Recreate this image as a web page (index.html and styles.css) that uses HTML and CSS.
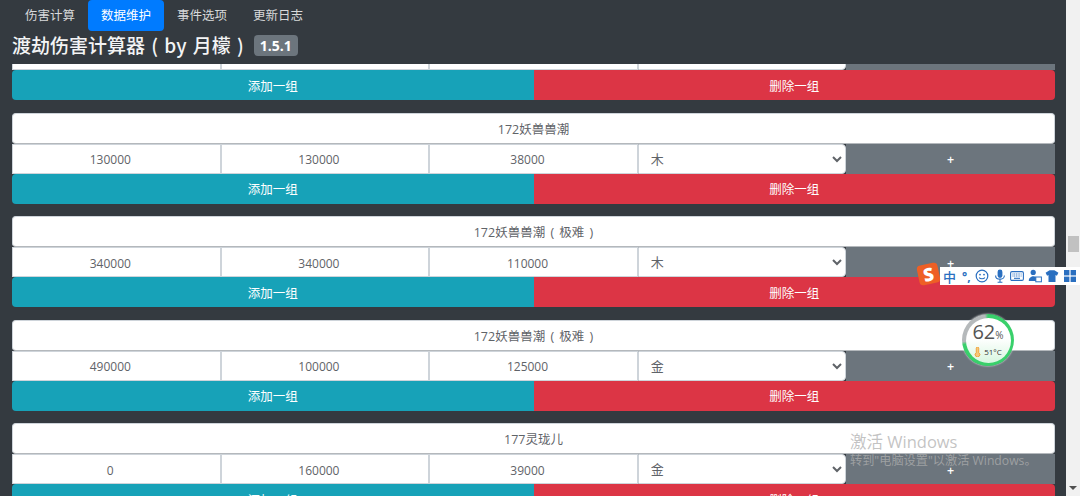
FILE: index.html
```html
<!DOCTYPE html>
<html lang="zh-CN">
<head>
    <meta charset="UTF-8">
    <meta name="viewport" content="width=device-width, initial-scale=1.0">
    <title>渡劫伤害计算器</title>
    <link rel="stylesheet" href="styles.css">
</head>
<body>
    <div class="page">
        <div class="main">
            <div class="top">
                <nav class="tabs">
                    <a class="tab">伤害计算</a>
                    <a class="tab active">数据维护</a>
                    <a class="tab">事件选项</a>
                    <a class="tab">更新日志</a>
                </nav>
                <h1 class="heading">渡劫伤害计算器 ( by 月檬 )<span class="badge">1.5.1</span></h1>
            </div>
            <div class="list">
                <div class="group first">
                    <div class="fields">
                        <input class="field" value="0">
                        <input class="field" value="0">
                        <input class="field" value="0">
                        <select class="field pick"><option>木</option></select>
                        <button class="plus">+</button>
                    </div>
                    <div class="actions">
                        <button class="add">添加一组</button>
                        <button class="del">删除一组</button>
                    </div>
                </div>
                <div class="group">
                    <input class="name" value="172妖兽兽潮">
                    <div class="fields">
                        <input class="field" value="130000">
                        <input class="field" value="130000">
                        <input class="field" value="38000">
                        <select class="field pick"><option>木</option></select>
                        <button class="plus">+</button>
                    </div>
                    <div class="actions">
                        <button class="add">添加一组</button>
                        <button class="del">删除一组</button>
                    </div>
                </div>
                <div class="group">
                    <input class="name" value="172妖兽兽潮 ( 极难 )">
                    <div class="fields">
                        <input class="field" value="340000">
                        <input class="field" value="340000">
                        <input class="field" value="110000">
                        <select class="field pick"><option>木</option></select>
                        <button class="plus">+</button>
                    </div>
                    <div class="actions">
                        <button class="add">添加一组</button>
                        <button class="del">删除一组</button>
                    </div>
                </div>
                <div class="group">
                    <input class="name" value="172妖兽兽潮 ( 极难 )">
                    <div class="fields">
                        <input class="field" value="490000">
                        <input class="field" value="100000">
                        <input class="field" value="125000">
                        <select class="field pick"><option>金</option></select>
                        <button class="plus">+</button>
                    </div>
                    <div class="actions">
                        <button class="add">添加一组</button>
                        <button class="del">删除一组</button>
                    </div>
                </div>
                <div class="group">
                    <input class="name" value="177灵珑儿">
                    <div class="fields">
                        <input class="field" value="0">
                        <input class="field" value="160000">
                        <input class="field" value="39000">
                        <select class="field pick"><option>金</option></select>
                        <button class="plus">+</button>
                    </div>
                    <div class="actions">
                        <button class="add">添加一组</button>
                        <button class="del">删除一组</button>
                    </div>
                </div>
            </div>
        </div>
        <div class="scrollbar">
            <div class="thumb"></div>
            <div class="arrow"></div>
        </div>
    </div>

    <!-- desktop things lying over the browser -->
    <div class="ime">
        <span class="ime-logo">S</span>
        <span class="ime-zh">中</span>
        <span class="ime-punct">°,</span>
        <svg class="ime-icon" viewBox="0 0 14 14"><circle cx="7" cy="7" r="5.8" fill="none" stroke="#2a6fc0" stroke-width="1.2"/><circle cx="5" cy="5.6" r=".9" fill="#2a6fc0"/><circle cx="9" cy="5.6" r=".9" fill="#2a6fc0"/><path d="M4.2 8.4c.8 1.7 4.8 1.7 5.6 0" fill="none" stroke="#2a6fc0" stroke-width="1.1"/></svg>
        <svg class="ime-icon" viewBox="0 0 14 14"><rect x="4.6" y="0.5" width="4.8" height="8.5" rx="2.4" fill="#2a6fc0"/><path d="M2.6 6.4c0 5 8.8 5 8.8 0M7 10.5v2.4M4.6 13.2h4.8" fill="none" stroke="#2a6fc0" stroke-width="1.1"/></svg>
        <svg class="ime-icon" viewBox="0 0 14 14"><rect x="0.6" y="2.6" width="12.8" height="8.8" rx="1.4" fill="none" stroke="#2a6fc0" stroke-width="1.1"/><path d="M2.5 5h9M2.5 7h9" stroke="#2a6fc0" stroke-width="1.1" stroke-dasharray="1 .7"/><path d="M4 9.3h6" stroke="#2a6fc0" stroke-width="1.1"/></svg>
        <svg class="ime-icon" viewBox="0 0 14 14"><circle cx="5.2" cy="3.4" r="2.6" fill="#2a6fc0"/><path d="M.8 12c0-6 8.6-6 8.4-1.5V12z" fill="#2a6fc0"/><rect x="7.8" y="8" width="5.6" height="4.8" fill="#fff" stroke="#2a6fc0"/></svg>
        <svg class="ime-icon" viewBox="0 0 14 14"><path d="M4.6 1.2h4.8l4 2.6-1.5 3-1.4-.7v7H3.500v-7l-1.400.7-1.500-3z" fill="#2a6fc0"/></svg>
        <svg class="ime-icon" viewBox="0 0 14 14"><rect x="1" y="1" width="5.400" height="5.400" fill="#2a6fc0"/><rect x="7.600" y="1" width="5.400" height="5.400" fill="#2a6fc0"/><rect x="1" y="7.600" width="5.400" height="5.400" fill="#2a6fc0"/><rect x="7.600" y="7.600" width="5.400" height="5.400" fill="#2a6fc0"/></svg>
    </div>

    <div class="gauge">
        <div class="gauge-inner">
            <div class="gauge-num">62<small>%</small></div>
            <div class="gauge-temp"><svg class="gauge-therm" viewBox="0 0 8 12"><path d="M2.500 1.500a1.500 1.500 0 0 1 3 0v5.300a2.800 2.800 0 1 1-3 0z" fill="#f6c77b" stroke="#ef9a2d"/></svg>51°C</div>
        </div>
    </div>

    <div class="activate">
        <div class="activate-title">激活 Windows</div>
        <div class="activate-sub">转到"电脑设置"以激活 Windows。</div>
    </div>
</body>
</html>
```

FILE: styles.css
```css
html, body {
    margin: 0;
    height: 100%;
    overflow: hidden;
}
body {
    font-family: "Open Sans", "Noto Sans CJK SC", sans-serif;
    font-size: 12.5px;
    color: #5f6368;
    background: #343a40;
}
* {
    box-sizing: border-box;
}
.page {
    display: flex;
    height: 496px;
}
.main {
    flex: 1;
    display: flex;
    flex-direction: column;
    min-width: 0;
}
.top {
    height: 64px;
    padding: 0 11px 0 12px;
    flex: none;
}
.tabs {
    display: flex;
    height: 31px;
}
.tab {
    width: 76px;
    line-height: 31px;
    text-align: center;
    color: rgba(255, 255, 255, 0.82);
    border-radius: 4px;
}
.tab.active {
    background: #007bff;
    color: #fff;
}
.heading {
    display: flex;
    align-items: center;
    margin: 0;
    height: 26px;
    font-family: "Noto Sans CJK SC", sans-serif;
    font-size: 19px;
    font-weight: 500;
    word-spacing: 2px;
    white-space: pre;
    color: #f3f4f5;
}
.badge {
    margin: 2px 0 0 10px;
    padding: 0 6px;
    height: 21px;
    line-height: 21px;
    font-family: "Open Sans", sans-serif;
    font-size: 14px;
    font-weight: 700;
    color: #fff;
    background: #6c757d;
    border-radius: 4px;
}
.list {
    flex: 1;
    overflow: hidden;
    padding: 0 11px 0 12px;
}
.group {
    margin-bottom: 12.5px;
}
.group.first {
    margin-top: -24px;
}
.name {
    display: block;
    width: 100%;
    height: 31px;
    text-align: center;
    font: inherit;
    word-spacing: 2px;
    color: #5f6368;
    background: #fff;
    border: 1px solid #ced4da;
    border-bottom-color: #b4b8bc;
    border-radius: 4px;
    outline: none;
}
.fields {
    display: grid;
    grid-template-columns: repeat(5, 1fr);
    height: 30px;
}
.field {
    min-width: 0;
    height: 30px;
    padding: 2px 13px 0 1px;
    text-align: center;
    font: inherit;
    font-size: 12px;
    color: #5f6368;
    background: #fff;
    border: 1px solid #ced4da;
    outline: none;
}
.pick {
    text-align: left;
    padding: 1px 0 1px 8px;
    font-size: 13px;
    border-radius: 0 4px 4px 0;
}
.plus {
    border: none;
    padding: 2px 0 0;
    font: inherit;
    font-weight: 600;
    color: #fff;
    background: #6c757d;
}
.actions {
    display: flex;
    height: 30px;
}
.add, .del {
    flex: 1;
    border: none;
    padding: 0;
    font: inherit;
    color: #fff;
}
.add {
    background: #17a2b8;
    border-radius: 4px 0 0 4px;
}
.del {
    background: #dc3545;
    border-radius: 0 4px 4px 0;
}
.scrollbar {
    width: 14px;
    flex: none;
    display: flex;
    flex-direction: column;
    align-items: center;
    padding-top: 236px;
    background: #f1f1f1;
}
.thumb {
    width: 11px;
    height: 16px;
    background: #c1c1c1;
}
.arrow {
    margin-top: auto;
    margin-bottom: 6px;
    border-left: 4px solid transparent;
    border-right: 4px solid transparent;
    border-top: 4px solid #505050;
}
.ime {
    position: absolute;
    left: 940px;
    top: 267px;
    width: 140px;
    height: 18px;
    display: flex;
    align-items: center;
    background: #fff;
    color: #2a6fc0;
}
.ime-logo {
    position: absolute;
    left: -22px;
    top: -3px;
    width: 21px;
    height: 20px;
    line-height: 20px;
    text-align: center;
    font-size: 18px;
    font-weight: 800;
    color: #fff;
    background: #ee5f25;
    border-radius: 4px;
    transform: rotate(-12deg);
}
.ime-zh {
    margin-left: 3px;
    width: 13px;
    font-size: 13px;
    font-weight: 500;
}
.ime-punct {
    margin-left: 6px;
    width: 17px;
    font-size: 12px;
    font-weight: 700;
}
.ime-icon {
    width: 14px;
    height: 14px;
    margin-right: 3.500px;
    flex: none;
}
.gauge {
    position: absolute;
    left: 962px;
    top: 314px;
    width: 52px;
    height: 52px;
    padding: 3.500px;
    border-radius: 50%;
    background: conic-gradient(#39d06b 0 72%, #b5b9bb 74% 98%, #39d06b 100%);
    box-shadow: 0 0 2px #fff;
}
.gauge-inner {
    height: 100%;
    border-radius: 50%;
    text-align: center;
    color: #555;
    background: linear-gradient(#fff 45%, #d8f6e0);
}
.gauge-num {
    padding-top: 2px;
    font-size: 20px;
    line-height: 24px;
}
.gauge-num small {
    font-size: 10px;
}
.gauge-temp {
    display: flex;
    align-items: center;
    justify-content: center;
    gap: 3px;
    font-size: 8px;
    line-height: 10px;
    color: #333;
}
.gauge-therm {
    width: 7px;
    height: 10px;
}
.activate {
    position: absolute;
    left: 850px;
    top: 432px;
    color: rgba(175, 175, 175, 0.75);
}
.activate-title {
    font-size: 16.500px;
    line-height: 20px;
}
.activate-sub {
    margin-top: 1px;
    font-size: 12.200px;
    line-height: 16px;
    white-space: nowrap;
}
```
